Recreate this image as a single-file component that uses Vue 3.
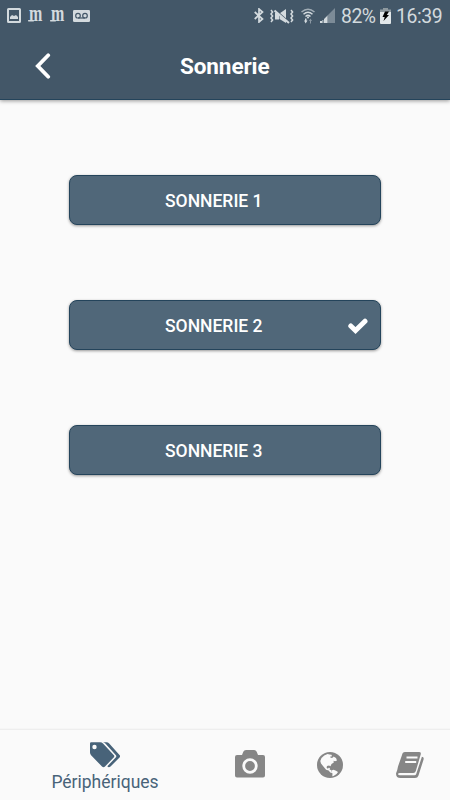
<script setup>
import { ref } from 'vue'

const selected = ref(2)
const ringtones = [1, 2, 3]
</script>

<template>
  <div class="screen">
    <header class="top">
      <div class="status">
        <svg class="picture" width="14" height="15" viewBox="0 0 14 15"><rect x="1" y="1" width="12" height="13" rx=".5" fill="none" stroke="currentColor" stroke-width="2" /><path d="M3 11V9l2-2 2 1 2-1 2 2v2z" fill="currentColor" /></svg>
        <span class="gothic">m</span>
        <span class="gothic">m</span>
        <svg class="voicemail" width="17" height="12" viewBox="0 0 17 12"><rect width="17" height="12" rx="1.3" fill="currentColor" /><g fill="none" stroke="#435768" stroke-width="1.2"><circle cx="5" cy="5.7" r="2.3" /><circle cx="12" cy="5.7" r="2.3" /><path d="M5 8h7" /></g></svg>
        <span class="spacer"></span>
        <svg class="bluetooth" width="10" height="15" viewBox="0 0 10 15"><path d="M.7 4l7.800 7L5 14V1l3.500 3L.7 11" fill="none" stroke="currentColor" stroke-width="1.700" /></svg>
        <svg class="vibrate" width="24" height="16" viewBox="0 0 24 16"><path d="M5 4.500h4v7H5zM9.500 5.500L16 1v14l-6.500-4z" fill="currentColor" /><path d="M4.500 1L19 14" stroke="#435768" stroke-width="1.500" /><path d="M4.500 2.500L19 15" stroke="currentColor" stroke-width="2" /><path d="M1 2l1.600 2L1 6l1.600 2L1 10l1.600 2L1 14M21 2l1.600 2L21 6l1.600 2L21 10l1.600 2L21 14" stroke="currentColor" stroke-width="1.500" fill="none" /></svg>
        <svg class="wifi" width="14" height="16" viewBox="0 0 14 16"><g fill="none" stroke="currentColor" stroke-width="1.500"><path d="M.5 4Q7-1.500 13.500 4" opacity=".65" /><path d="M2.500 6.200Q7 2.300 11.500 6.200M4.500 8.500Q7 6.300 9.500 8.500" /></g><circle cx="7" cy="9.500" r="1" fill="currentColor" /><path d="M3 12.500h1V10.500h1.500v2h1L4.700 15.500z" fill="currentColor" /><path d="M8 13l1.500-2.500L11 13h-1v2.500H9V13z" fill="currentColor" opacity=".5" /></svg>
        <svg class="signal" width="15" height="15" viewBox="0 0 15 15"><path d="M7.500 7.500L15 0v15H7.500z" fill="currentColor" opacity=".4" /><path d="M4 11l3.500-3.500V15H4zM0 13h2v2H0zM2.400 12h1v3h-1z" fill="currentColor" /></svg>
        <span class="percent">82%</span>
        <svg class="battery" width="11" height="16" viewBox="0 0 11 16"><path d="M3 0h5v2H3zM0 1.500h11V4H0z" fill="#8e999f" /><path d="M0 4h11v11a1 1 0 0 1-1 1H1a1 1 0 0 1-1-1z" fill="#e2e7e9" /><path d="M5 3.500h4L6.800 7H9L3.500 13 4.700 9H2.500z" fill="#000" /></svg>
        <span class="time">16:39</span>
      </div>
      <div class="toolbar">
        <svg class="back" width="16" height="26" viewBox="0 0 16 26"><path d="M13.200 2.300L2.800 13l10.400 10.700" fill="none" stroke="#fff" stroke-width="3.800" stroke-linecap="round" /></svg>
        <h1 class="title">Sonnerie</h1>
      </div>
    </header>

    <main class="list">
      <button v-for="n in ringtones" :key="n" class="ringtone" @click="selected = n">
        <span class="label">SONNERIE {{ n }}</span>
        <svg v-if="selected === n" class="check" width="20" height="16" viewBox="0 0 20 16"><path d="M2.800 8l4.700 4.500L17 3.200" fill="none" stroke="#fff" stroke-width="5" stroke-linejoin="miter" stroke-linecap="round" /></svg>
      </button>
    </main>

    <nav class="tabs">
      <a class="tab active">
        <svg width="30" height="26" viewBox="0 0 30 26"><path fill-rule="evenodd" d="M0 1.500Q0 .3 1.200.3h9q1.500 0 2.800 1.200L23.700 13q1.200 1.200 0 2.500L15 24.500q-1.500 1.500-3 0L1.300 13.500Q0 12.200 0 10.500zM4.500 2.800a2.200 2.200 0 1 0 0 4.400 2.200 2.200 0 0 0 0-4.400z" fill="currentColor" /><path d="M13 .3h3.500q1.500 0 2.700 1.200L29.500 13q1.200 1.200 0 2.500l-9 9q-1.700 1.500-3.200-.2l8.400-8.800q1.200-1.300 0-2.500L15.600 1.700Q14.500.6 13 .3z" fill="currentColor" /></svg>
        <span class="caption">Périphériques</span>
      </a>
      <a class="tab camera">
        <svg width="30" height="28" viewBox="0 0 30 28"><path d="M2 5h5l1.300-3.300Q9 0 11 0h8q2 0 2.700 1.700L23 5h5q2 0 2 2v18.500q0 2-2 2H2q-2 0-2-2V7q0-2 2-2z" fill="currentColor" /><circle cx="15" cy="16" r="6.300" fill="none" stroke="#fafafa" stroke-width="2.800" /></svg>
      </a>
      <a class="tab globe">
        <svg width="26" height="26" viewBox="0 0 26 26"><circle cx="13" cy="13" r="13" fill="currentColor" /><path d="M4.500 6Q7 3 10.500 2l2 .5 2 .2.500 1.600-2 .5 1 1.100 2-.4.500-1 2.500 1.500 1 2.500-2 .8-1.500-.5.300 1.700-2.300 1.500-1 2.200-1.500-.8-2 .5-.4 1.800 1.300 1 .8-1 1.200.3-.2 1.700 1.500.3.300 2.200 1.800.3-1 .7-2-.7-1.700-2.100-2.500-.6-2.100-2.500L4 11.500 3.300 9z" fill="#fafafa" /><path d="M14.500 18.500l2-.8 2.500 1 2 1.300q-1 2.500-4.500 4l-1.200.2.200-2.700-1-1.500z" fill="#fafafa" /></svg>
      </a>
      <a class="tab book">
        <svg width="28" height="26" viewBox="0 0 28 26"><path d="M9 0h14q2.400 0 1.700 2.500L19.800 19q-.6 2-2.500 2H4q-1.800 0-2 1 .2 1.200 2 1.200h14.500q1.300 0 1.800-1.500l5.600-17Q28.300 5 27.500 7.700L22.400 23.700Q21.600 26 19 26H4.500Q0 26 0 21.500 1.500 18 2 14.500L6 3Q6.500 0 9 0z" fill="currentColor" /><path d="M10.500 5.500h11M9.200 10h11" stroke="#fafafa" stroke-width="1.900" /></svg>
      </a>
    </nav>
  </div>
</template>

<style>
body {
  margin: 0;
}
</style>

<style scoped>
.screen {
  width: 450px;
  height: 800px;
  display: flex;
  flex-direction: column;
  background: #fafafa;
  font-family: Roboto, "Liberation Sans", sans-serif;
  overflow: hidden;
}
svg {
  display: block;
  flex: none;
}
.top {
  height: 100px;
  flex: none;
  box-sizing: border-box;
  background: #435768;
  border-bottom: 1px solid #24445b;
  box-shadow: 0 1px 4px rgba(0, 0, 0, 0.4);
  color: #d3dade;
}
.status {
  height: 32px;
  display: flex;
  align-items: flex-start;
  padding: 8px 8px 0 7px;
  box-sizing: border-box;
}
.gothic {
  position: relative;
  font: bold 16px/16px "Liberation Serif", serif;
  width: 14px;
  margin-left: 8px;
  white-space: nowrap;
  transform: scaleY(1.4);
  transform-origin: 0 12px;
}
.gothic::before {
  content: "";
  position: absolute;
  left: -1px;
  top: 11.5px;
  width: 6px;
  height: 1.5px;
  border-radius: 2px;
  background: currentColor;
}
.voicemail {
  margin: 2px 0 0 8px;
}
.spacer {
  flex: 1;
}
.vibrate {
  margin-left: 6px;
}
.wifi {
  margin-left: 7px;
}
.signal {
  margin-left: 5px;
}
.percent,
.time {
  font-size: 19.400px;
  line-height: 18px;
  white-space: nowrap;
}
.percent {
  width: 39px;
  margin-left: 6px;
  letter-spacing: -0.5px;
}
.time {
  width: 46px;
  margin-left: 5px;
  letter-spacing: -0.4px;
}
.toolbar {
  height: 67px;
  display: flex;
  align-items: center;
  padding-left: 35px;
}
.title {
  margin: 1px 0 0 129px;
  font-size: 22.500px;
  line-height: 30px;
  font-weight: 700;
  letter-spacing: -0.1px;
  color: #fff;
}
.list {
  flex: 1;
  display: flex;
  flex-direction: column;
  align-items: center;
  gap: 75px;
  padding-top: 75px;
}
.ringtone {
  width: 312px;
  height: 50px;
  box-sizing: border-box;
  display: flex;
  align-items: center;
  padding: 2px 12px 0 95px;
  border: 1px solid #24445b;
  border-radius: 8px;
  background: #506779;
  box-shadow: 0 1px 3px rgba(0, 0, 0, 0.4);
  color: #fff;
  font-family: inherit;
  font-size: 17.500px;
  font-weight: 500;
}
.check {
  margin: -1px 0 0 auto;
}
.tabs {
  height: 71px;
  flex: none;
  box-sizing: border-box;
  border-top: 1px solid #eee;
  box-shadow: 0 -1px 1px #f6f6f6;
  display: flex;
  align-items: flex-start;
  color: #868686;
}
.tab {
  display: flex;
  flex-direction: column;
  align-items: center;
}
.active {
  width: 210px;
  padding-top: 12px;
  color: #486379;
}
.caption {
  margin-top: 3px;
  font-size: 17.500px;
  line-height: 22px;
}
.camera {
  margin: 20px 0 0 25px;
}
.globe {
  margin: 22px 0 0 52px;
}
.book {
  margin: 22px 0 0 53px;
}
</style>
